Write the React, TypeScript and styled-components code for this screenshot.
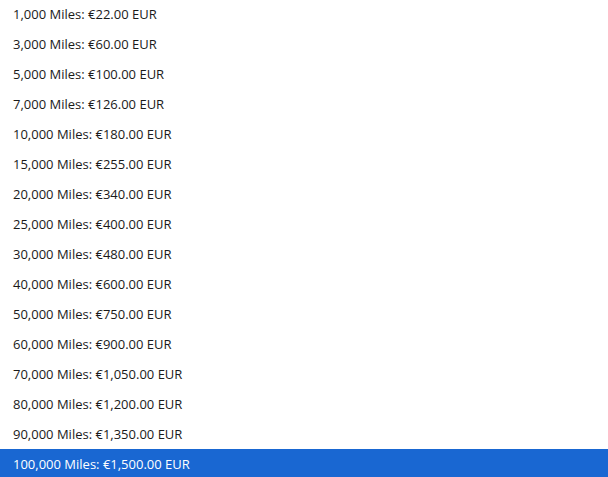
import React from "react";
import styled, { createGlobalStyle } from "styled-components";

const Global = createGlobalStyle`
  html, body { margin: 0; padding: 0; background: #ffffff; overflow: hidden; }
  body { font-family: "Open Sans", "Liberation Sans", sans-serif; }
`;

const List = styled.ul`
  list-style: none;
  margin: -1px 0 0 0;
  padding: 0;
  width: 608px;
  height: 478px;
  background: #ffffff;
  overflow: hidden;
`;

const Option = styled.li<{ $selected?: boolean }>`
  height: 30px;
  line-height: 31px;
  padding-left: 13px;
  font-size: 13px;
  color: ${(p) => (p.$selected ? "#ffffff" : "#1a1a1a")};
  background: ${(p) => (p.$selected ? "#1967d2" : "transparent")};
  white-space: nowrap;
`;

const options = [
  "1,000 Miles: €22.00 EUR",
  "3,000 Miles: €60.00 EUR",
  "5,000 Miles: €100.00 EUR",
  "7,000 Miles: €126.00 EUR",
  "10,000 Miles: €180.00 EUR",
  "15,000 Miles: €255.00 EUR",
  "20,000 Miles: €340.00 EUR",
  "25,000 Miles: €400.00 EUR",
  "30,000 Miles: €480.00 EUR",
  "40,000 Miles: €600.00 EUR",
  "50,000 Miles: €750.00 EUR",
  "60,000 Miles: €900.00 EUR",
  "70,000 Miles: €1,050.00 EUR",
  "80,000 Miles: €1,200.00 EUR",
  "90,000 Miles: €1,350.00 EUR",
  "100,000 Miles: €1,500.00 EUR",
];

export default function App() {
  return (
    <>
      <Global />
      <List>
        {options.map((o, i) => (
          <Option key={o} $selected={i === options.length - 1}>
            {o}
          </Option>
        ))}
      </List>
    </>
  );
}
